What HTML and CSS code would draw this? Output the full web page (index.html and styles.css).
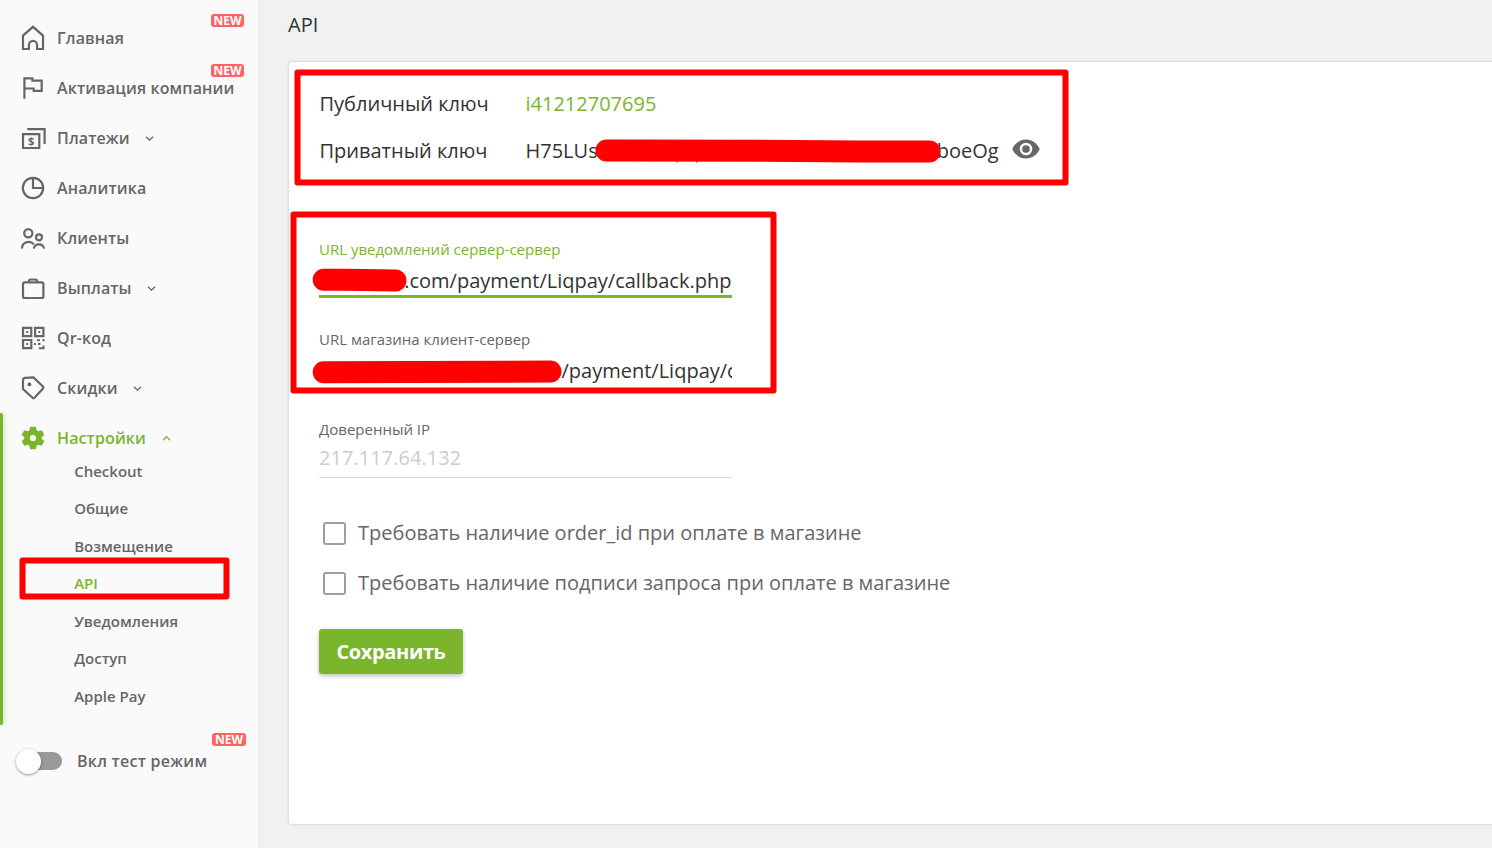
FILE: index.html
```html
<!DOCTYPE html>
<html lang="ru">
<head>
<meta charset="utf-8">
<title>API</title>
<link rel="stylesheet" href="styles.css">
</head>
<body>
<div class="app">
  <aside class="sidebar">
    <nav class="nav">
      <a class="item"><svg class="icon" viewBox="0 0 24 24"><path d="M2 23V9.600L12 .8l10 8.800V23h-5.900v-4a4.100 4.100 0 0 0-8.200 0v4z"/></svg><span>Главная</span><b class="new">NEW</b></a>
      <a class="item"><svg class="icon" viewBox="0 0 24 24"><path d="M3.400 22.800V2.400h8v2.200h9.300v10.300h-8v-2.400H3.400"/></svg><span>Активация компании</span><b class="new">NEW</b></a>
      <a class="item"><svg class="icon" viewBox="0 0 24 24"><path d="M2 8.200h16.300V22H2zM6.200 3.100h17.400V18"/><text class="dollar" x="10.200" y="19">$</text></svg><span>Платежи</span><svg class="chev" viewBox="0 0 9 9"><path d="M1 2.700l3.500 3.500L8 2.700"/></svg></a>
      <a class="item"><svg class="icon" viewBox="0 0 24 24"><circle cx="12" cy="12" r="10.200"/><path d="M12 1.800V12h10.200"/></svg><span>Аналитика</span></a>
      <a class="item"><svg class="icon wide" viewBox="0 0 26 24"><circle cx="8.300" cy="7.300" r="4.100"/><circle cx="19" cy="11.300" r="3"/><path d="M2 22.600a6.600 6.600 0 0 1 11.800-4.200M13.800 22.600a5.200 5.200 0 0 1 10.200 0"/></svg><span>Клиенты</span></a>
      <a class="item"><svg class="icon" viewBox="0 0 24 24"><rect x="2" y="6.400" width="20.400" height="15.600" rx="1.800"/><path d="M8 6.200V5.200q0-1.700 1.700-1.700h4.800q1.700 0 1.700 1.700v1"/></svg><span>Выплаты</span><svg class="chev" viewBox="0 0 9 9"><path d="M1 2.700l3.500 3.500L8 2.700"/></svg></a>
      <a class="item"><svg class="icon" viewBox="0 0 24 24"><path d="M2 1.900h8.300v8.200H2zM14.100 1.900h8.300v8.200h-8.300zM2 14h8.300v8.200H2z"/><path class="solid" d="M5.200 5h1.900v1.900H5.200zM17.300 5h1.900v1.900h-1.900zM5.200 17.100h1.900V19H5.200zM16 13.300h3v1.700h-3zM13 17h1.900v2H13zM17 17h2.500v1.900H17zM21.500 13h2v2.200h-2zM21.500 19.400h2v3.900h-5.600v-2h3.600z"/></svg><span>Qr-код</span></a>
      <a class="item"><svg class="icon" viewBox="0 0 24 24"><path d="M2 4q.1-1.900 2.200-2.100l8.200-.5 9.600 9.100q.9 1 0 2l-8.500 9.300q-1 1-2 0L2 13z"/><circle class="solid" cx="8.400" cy="8.400" r="1.900"/></svg><span>Скидки</span><svg class="chev" viewBox="0 0 9 9"><path d="M1 2.700l3.500 3.500L8 2.700"/></svg></a>
      <div class="group">
        <a class="item active"><svg class="icon" viewBox="0 0 24 24"><path class="solid" fill-rule="evenodd" d="M9.200.8h5.600l.8 3.400 1.900 1.100 3.300-1.100 2.500 4.700-2.600 2.300v1.600l2.600 2.300-2.500 4.700-3.300-1.100-1.900 1.100-.8 3.400H9.200l-.8-3.400-1.900-1.100-3.300 1.100-2.500-4.700 2.600-2.300v-1.600L.7 8.900l2.500-4.700 3.300 1.100 1.900-1.100zM12 8.900a3.100 3.100 0 1 0 0 6.200 3.100 3.100 0 0 0 0-6.200z"/></svg><span>Настройки</span><svg class="chev" viewBox="0 0 9 9"><path d="M1 6.200l3.500-3.500L8 6.200"/></svg></a>
        <ul class="sub">
          <li>Checkout</li><li>Общие</li><li>Возмещение</li><li class="current">API</li><li>Уведомления</li><li>Доступ</li><li>Apple Pay</li>
        </ul>
      </div>
    </nav>
    <div class="test"><i class="toggle"></i><span>Вкл тест режим</span><b class="new">NEW</b></div>
  </aside>
  <main class="main">
    <h1>API</h1>
    <section class="card">
      <dl class="keys">
        <dt>Публичный ключ</dt><dd class="public">i41212707695</dd>
        <dt>Приватный ключ</dt><dd class="private"><span>H75LUs</span><span class="tail">boeOg</span><svg class="eye" viewBox="0 0 28 20"><path fill-rule="evenodd" d="M14 .5C7.800.5 2.600 4.500.3 10 2.600 15.500 7.800 19.500 14 19.500S25.400 15.500 27.700 10C25.400 4.500 20.200.5 14 .5zm0 15.800a6.300 6.300 0 1 1 0-12.600 6.300 6.300 0 0 1 0 12.600z"/><circle cx="14" cy="10" r="3.800"/></svg></dd>
      </dl>
      <div class="fields">
        <label class="field focus"><span class="label">URL уведомлений сервер-сервер</span><span class="value right">.com/payment/Liqpay/callback.php</span></label>
        <label class="field"><span class="label">URL магазина клиент-сервер</span><span class="value shop">/payment/Liqpay/callback.php</span></label>
        <label class="field"><span class="label">Доверенный IP</span><span class="value hint">217.117.64.132</span></label>
      </div>
      <div class="checks">
        <label class="check"><i class="box"></i><span>Требовать наличие order_id при оплате в магазине</span></label>
        <label class="check"><i class="box"></i><span>Требовать наличие подписи запроса при оплате в магазине</span></label>
      </div>
      <button class="save">Сохранить</button>
    </section>
  </main>
  <svg class="marks" viewBox="0 0 1492 848">
    <g class="frames">
      <rect x="297.500" y="72.500" width="768" height="110"/>
      <rect x="293.500" y="214.500" width="480" height="176"/>
      <rect x="22.500" y="560.500" width="204" height="36"/>
    </g>
    <path class="tips" d="M676.500 161.500h1.600v1h-1.600zM696 161.500h1.600v1H696z"/>
    <g class="strokes">
      <path d="M606.500 150.600L760 150.800L860 151.500H929.500"/>
      <path d="M323.700 279.800H345L395.500 280.500"/>
      <path d="M323.700 372.300L500 371.800L550.500 371.500"/>
    </g>
  </svg>
</div>
</body>
</html>
```
FILE: styles.css
```css
* { box-sizing: border-box; }
body { margin: 0; font-family: "Open Sans", "Noto Sans", sans-serif; color: #333; background: #f1f1f1; }
.app { position: relative; display: flex; width: 1492px; height: 848px; overflow: hidden; }

.sidebar { width: 258px; flex: none; background: #fafafa; color: #666; box-shadow: 0 0 1px rgba(0,0,0,.06); }
.nav { padding-top: 13px; }
.item { position: relative; display: flex; align-items: center; height: 50px; padding-left: 21px; font-size: 16px; font-weight: 600; letter-spacing: .12px; }
.icon { width: 24px; height: 24px; margin-right: 12px; flex: none; overflow: visible; fill: none; stroke: #666; stroke-width: 2.2; }
.icon.wide { width: 26px; margin-left: -1px; margin-right: 11px; }
.icon .solid { fill: #666; stroke: none; }
.icon .dollar { font-size: 11px; font-weight: 700; text-anchor: middle; letter-spacing: 0; fill: #666; stroke: none; }
.chev { width: 9px; height: 9px; margin-left: 15.5px; fill: none; stroke: #666; stroke-width: 1.3; }
.new { position: absolute; right: 14px; top: 1px; width: 33px; height: 13px; border-radius: 3px; background: #ff6262; color: #fff; font-size: 12px; font-weight: 700; line-height: 13px; text-align: center; letter-spacing: 0; }
.group { position: relative; height: 312px; }
.group::before { content: ""; position: absolute; left: 0; top: 0; width: 3px; height: 312px; border-radius: 0 2px 2px 0; background: #7ab52b; box-shadow: 1px 0 5px rgba(122,181,43,.4); }
.active { color: #7ab52b; margin-bottom: -10px; }
.active .chev { stroke: #7ab52b; }
.active .icon .solid { fill: #7ab52b; }
.sub { margin: 0; padding: 0 0 0 74.2px; list-style: none; font-size: 15px; font-weight: 600; line-height: 37px; }
.sub li:nth-child(even) { padding-bottom: 1px; }
.sub .current { color: #7ab52b; }
.test { position: relative; display: flex; align-items: center; height: 50px; margin-top: 11px; padding-left: 25px; font-size: 16px; font-weight: 600; letter-spacing: .25px; }
.test .new { right: 12px; top: -3px; width: 34px; }
.toggle { position: relative; width: 37px; height: 18px; margin-right: 15px; border-radius: 9px; background: #999; }
.toggle::before { content: ""; position: absolute; left: -9px; top: -3px; width: 25px; height: 25px; border-radius: 50%; background: #fff; box-shadow: 0 1px 3px rgba(0,0,0,.4); }

.main { flex: 1; min-width: 0; padding-left: 31px; }
h1 { margin: 0; height: 62px; padding-top: 11px; font-size: 20px; font-weight: 400; line-height: 28px; margin-left: -1px; }
.card { width: 1220px; height: 762px; padding: 18px 30px; background: #fff; border-radius: 3px; box-shadow: 0 0 3px rgba(0,0,0,.2); font-size: 20px; }
.keys { display: grid; grid-template-columns: 206px auto; grid-auto-rows: 47px; align-items: center; margin: 0; padding-left: .5px; }
.keys dd { margin: 0; }
.public { color: #7ab52b; }
.private { display: flex; align-items: center; }
.private .tail { margin-left: 339px; }
.eye { width: 28px; height: 20px; margin: -3px 0 0 13.5px; fill: #666; }
.fields { width: 413px; padding-top: 63px; }
.field { display: flex; flex-direction: column; height: 90px; }
.label { height: 24px; font-size: 15px; line-height: 24px; color: #666; }
.value { height: 39px; padding-top: 6px; line-height: 28px; white-space: nowrap; overflow: hidden; border-bottom: 1px solid #ddd; }
.focus .label { color: #7ab52b; }
.focus .value { height: 37px; border-bottom: 3px solid #7ab52b; }
.right { text-align: right; padding-right: .6px; }
.shop { padding-left: 242.5px; }
.value.hint { height: 37px; padding-top: 3px; color: #ccc; letter-spacing: .05px; }
.checks { padding-top: 1px; color: #666; }
.check { display: flex; align-items: center; height: 50px; padding-left: 4px; }
.check span { margin-top: -1px; }
.box { width: 23px; height: 23px; border: 2px solid #9f9f9f; border-radius: 3px; margin-right: 12px; }
.save { display: block; width: 144px; height: 45px; margin-top: 21px; padding: 0; border: 0; border-radius: 3px; background: #7ab52b; color: #fff; font: 700 20px "Open Sans", sans-serif; letter-spacing: -.38px; box-shadow: 0 2px 4px rgba(0,0,0,.25); }

.marks { position: absolute; left: 0; top: 0; width: 1492px; height: 848px; fill: none; stroke: #f00; }
.frames { stroke-width: 6; stroke-linejoin: round; }
.strokes { stroke-width: 22; stroke-linecap: round; }
.tips { fill: #444; stroke: none; }
```
